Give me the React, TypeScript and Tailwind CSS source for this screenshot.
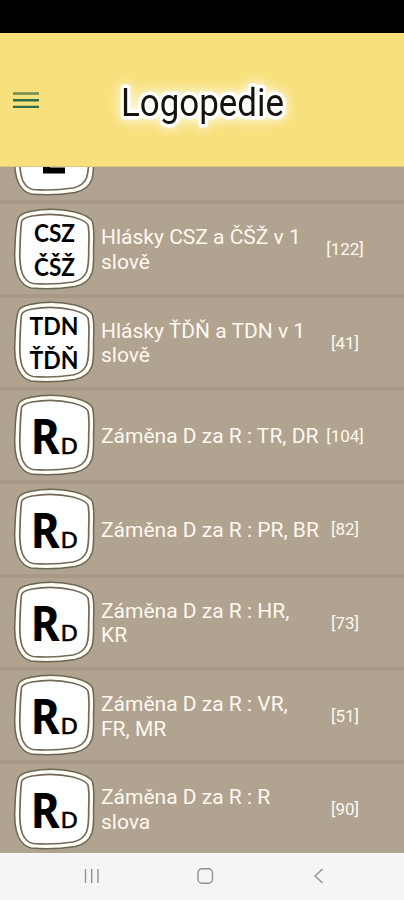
import { ReactNode } from 'react'

type Category = {
  id: number
  title: string
  count: string
  icon: ReactNode
}

const PairLetters = ({
  top,
  bottom,
  x,
  width
}: {
  top: string
  bottom: string
  x: number
  width: number
}) => (
  <g fontSize="24" fontWeight="700">
    <text x={x} y="33.5" textLength={width} lengthAdjust="spacingAndGlyphs">
      {top}
    </text>
    <text x={x} y="68" textLength={width} lengthAdjust="spacingAndGlyphs">
      {bottom}
    </text>
  </g>
)

const SwapLetters = () => (
  <g className="font-['Noto_Sans',sans-serif]">
    <text
      x="17.7"
      y="59.5"
      fontSize="47.5"
      fontWeight="700"
      textLength="29"
      lengthAdjust="spacingAndGlyphs"
    >
      R
    </text>
    <text
      x="47.5"
      y="59.5"
      fontSize="22.5"
      fontWeight="400"
      stroke="#000"
      strokeWidth="0.6"
      textLength="17.5"
      lengthAdjust="spacingAndGlyphs"
    >
      D
    </text>
  </g>
)

const categories: Category[] = [
  {
    id: 1,
    title: '',
    count: '',
    icon: <path d="M30 49h9l-2 4.500h15v6H30z" />
  },
  {
    id: 2,
    title: 'Hlásky CSZ a ČŠŽ v 1 slově',
    count: '[122]',
    icon: <PairLetters top="CSZ" bottom="ČŠŽ" x={21} width={41} />
  },
  {
    id: 3,
    title: 'Hlásky ŤĎŇ a TDN v 1 slově',
    count: '[41]',
    icon: <PairLetters top="TDN" bottom="ŤĎŇ" x={16.5} width={49} />
  },
  {
    id: 4,
    title: 'Záměna D za R : TR, DR',
    count: '[104]',
    icon: <SwapLetters />
  },
  {
    id: 5,
    title: 'Záměna D za R : PR, BR',
    count: '[82]',
    icon: <SwapLetters />
  },
  {
    id: 6,
    title: 'Záměna D za R : HR, KR',
    count: '[73]',
    icon: <SwapLetters />
  },
  {
    id: 7,
    title: 'Záměna D za R : VR, FR, MR',
    count: '[51]',
    icon: <SwapLetters />
  },
  {
    id: 8,
    title: 'Záměna D za R : R slova',
    count: '[90]',
    icon: <SwapLetters />
  }
]

const Tile = ({ children }: { children: ReactNode }) => (
  <svg
    viewBox="0 0 82 82"
    className="-mt-px h-[82px] w-[82px] shrink-0 overflow-visible font-['Lato',sans-serif]"
  >
    <path
      d="M5 11Q6 6 17 3.5Q40-1 62 4Q77 8 79.500 14Q81.500 22 80.500 40Q81 58 79 65Q75 76 62 78.500Q40 82 18 80Q10 78 5.500 69Q0.500 58 2 38Q2.500 20 5 11Z"
      fill="#fffff6"
      stroke="#6b6553"
      strokeWidth="1.5"
    />
    <path
      d="M8.500 14Q9 10 19 8Q40 4.500 60 9Q73 12.500 75 17Q76.500 24 75.700 41Q76 57 73.500 64Q70 72 60 74Q40 77 20 75.500Q13 74 9.500 66Q6 57 7 39Q7.500 22 8.500 14Z"
      fill="#fff"
      stroke="#71685a"
      strokeWidth="1.7"
    />
    {children}
  </svg>
)

const Header = () => (
  <header className="flex h-[134px] shrink-0 items-center border-b border-[#d9c67b] bg-[#f8e07c]">
    <svg viewBox="0 0 26 18" className="mt-px ml-[13px] h-[18px] w-[26px]">
      <path d="M0 2.500h26" stroke="#728c50" strokeWidth="2.6" />
      <path d="M0 9.200h26M0 15.900h26" stroke="#2e6e46" strokeWidth="2.4" />
    </svg>
    <h1 className="ml-[63px]">
      <svg
        viewBox="0 0 202 80"
        className="h-20 w-[202px] overflow-visible font-['Roboto',sans-serif] drop-shadow-[0_0_7px_#fff]"
      >
        <text
          x="19"
          y="55.5"
          fontSize="39"
          textLength="163"
          lengthAdjust="spacingAndGlyphs"
          fill="#15130c"
          stroke="#fff"
          strokeWidth="7"
          strokeLinejoin="round"
          paintOrder="stroke"
        >
          Logopedie
        </text>
      </svg>
    </h1>
  </header>
)

const CategoryRow = ({ title, count, icon }: Category) => (
  <li className="flex h-[93.35px] items-center border-b-4 border-[#a89885] pl-[13px]">
    <Tile>{icon}</Tile>
    <span className="ml-[6px] w-[219px] shrink-0 pt-[2px] text-[21px] leading-[24.7px]">
      {title}
    </span>
    <span className="ml-px w-[48px] pt-[2px] text-center text-[17px]">
      {count}
    </span>
  </li>
)

const NavigationBar = () => (
  <nav className="flex h-[47px] shrink-0 items-center justify-between bg-[#f5f5f5] pr-[79px] pb-px pl-[83px]">
    <svg viewBox="0 0 18 18" className="h-[18px] w-[18px]">
      <path d="M2.5 2v14M8.7 2v14M15 2v14" stroke="#929292" strokeWidth="1.4" />
    </svg>
    <svg viewBox="0 0 18 18" className="mr-[3px] h-[18px] w-[18px]">
      <rect
        x="2"
        y="1.8"
        width="14.5"
        height="14.5"
        rx="4"
        fill="none"
        stroke="#929292"
        strokeWidth="1.4"
      />
    </svg>
    <svg viewBox="0 0 14 18" className="h-[18px] w-[14px]">
      <path
        d="M11.5 2 4 9l7.5 7"
        fill="none"
        stroke="#929292"
        strokeWidth="1.4"
      />
    </svg>
  </nav>
)

const App = () => {
  return (
    <div className="flex h-screen w-full flex-col overflow-hidden bg-[#b0a390] font-['Roboto',sans-serif]">
      <div className="h-[33px] shrink-0 bg-black" />
      <Header />

      <main className="min-h-0 flex-1 overflow-hidden">
        <ul className="-mt-[56px] text-[#fff8ef]">
          {categories.map((category) => (
            <CategoryRow key={category.id} {...category} />
          ))}
        </ul>
      </main>

      <NavigationBar />
    </div>
  )
}

export default App
